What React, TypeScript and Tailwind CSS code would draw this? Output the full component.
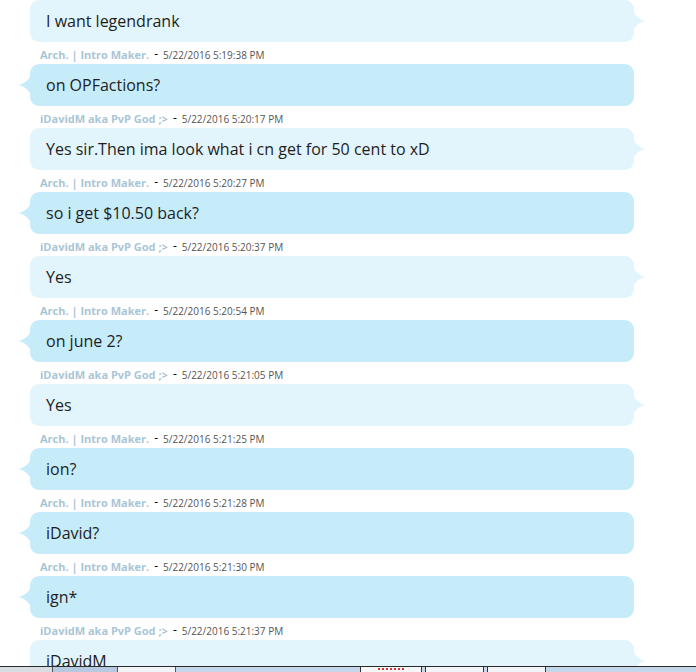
import React from "react";

type Msg = { from: "arch" | "david"; text: string; time?: string };

const messages: Msg[] = [
  { from: "david", text: "I want legendrank" },
  { from: "arch", text: "on OPFactions?", time: "5/22/2016 5:19:38 PM" },
  { from: "david", text: "Yes sir.Then ima look what i cn get for 50 cent to xD", time: "5/22/2016 5:20:17 PM" },
  { from: "arch", text: "so i get $10.50 back?", time: "5/22/2016 5:20:27 PM" },
  { from: "david", text: "Yes", time: "5/22/2016 5:20:37 PM" },
  { from: "arch", text: "on june 2?", time: "5/22/2016 5:20:54 PM" },
  { from: "david", text: "Yes", time: "5/22/2016 5:21:05 PM" },
  { from: "arch", text: "ion?", time: "5/22/2016 5:21:25 PM" },
  { from: "arch", text: "iDavid?", time: "5/22/2016 5:21:28 PM" },
  { from: "arch", text: "ign*", time: "5/22/2016 5:21:30 PM" },
  { from: "david", text: "iDavidM", time: "5/22/2016 5:21:37 PM" },
];

const names = { arch: "Arch. | Intro Maker.", david: "iDavidM aka PvP God ;>" };

const Tail: React.FC<{ side: "left" | "right"; color: string }> = ({ side, color }) => (
  <svg
    width="13"
    height="24"
    viewBox="0 0 13 24"
    className={side === "left" ? "absolute left-[-12px] top-[9px]" : "absolute right-[-12px] top-[9px] -scale-x-100"}
  >
    <path d="M13 0 C12 7 6 11 0 12 C6 13 12 17 13 24 Z" fill={color} />
  </svg>
);

const Bubble: React.FC<{ msg: Msg }> = ({ msg }) => {
  const dark = msg.from === "arch";
  const color = dark ? "#c6ecfa" : "#e2f5fc";
  return (
    <div className={`relative h-[42px] rounded-[9px] flex items-center pl-4 text-[16px] text-[#1e1e1e] ${dark ? "bg-[#c6ecfa]" : "bg-[#e2f5fc]"}`}>
      <Tail side={dark ? "left" : "right"} color={color} />
      <span>{msg.text}</span>
    </div>
  );
};

export default function App() {
  return (
    <div className="relative h-[672px] overflow-hidden bg-white" style={{ fontFamily: '"Open Sans", "Noto Sans", sans-serif' }}>
      <div className="ml-[30px] w-[604px]">
        {messages.map((m, i) => (
          <div key={i}>
            {m.time && (
              <div className="h-[22px] flex items-center gap-[5px] pl-[10px] pt-[4px]">
                <span className="text-[11px] font-bold text-[#a9c6d6]">{names[m.from]}</span>
                <span className="text-[12px] leading-none text-black relative top-[-1px]">-</span>
                <span className="text-[10px] text-[#555]">{m.time}</span>
              </div>
            )}
            <Bubble msg={m} />
          </div>
        ))}
      </div>

      {/* taskbar strip at the bottom edge */}
      <div className="absolute bottom-0 left-0 right-0 h-[6px] border-t border-[#2a2a2a] flex bg-[#c9d9ea]">
        <div className="w-[52px] bg-[#d8dde3]" />
        <div className="w-[65px] bg-[#b7c9de] border-l border-[#555]" />
        <div className="w-[59px] bg-[#f2f4f7] border-x border-[#555]" />
        <div className="w-[184px] bg-[#c4d6ea]" />
        <div className="w-[62px] bg-[#f5f6f8] border-x border-[#333] flex justify-center">
          <div className="mt-[1px] w-[26px] border-t-2 border-dotted border-[#d33]" />
        </div>
        <div className="w-[3px]" />
        <div className="w-[59px] bg-[#f2f4f7] border-x border-[#333]" />
        <div className="w-[3px]" />
        <div className="w-[59px] bg-[#f2f4f7] border-x border-[#333]" />
        <div className="flex-1 bg-[#c4d6ea]" />
      </div>
    </div>
  );
}
